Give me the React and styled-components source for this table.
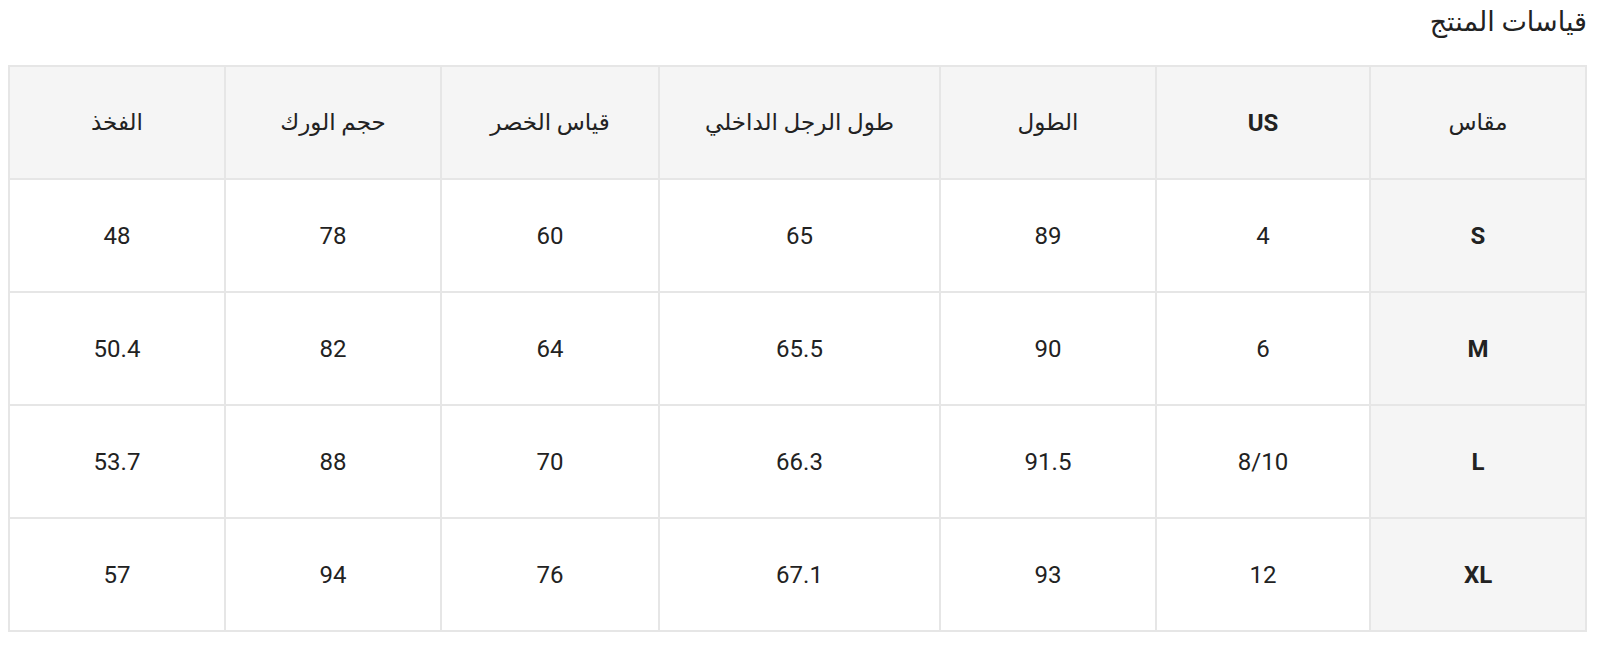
import React from 'react'
import styled, { createGlobalStyle } from 'styled-components'

const GlobalStyle = createGlobalStyle`
  html, body {
    margin: 0;
    padding: 0;
    background: #ffffff;
  }
  body {
    font-family: Roboto, "Noto Sans", "DejaVu Sans", sans-serif;
    color: #222222;
  }
`

const Page = styled.div`
  direction: rtl;
  padding: 0 13px 0 10px;
`

const Title = styled.h2`
  margin: 0;
  height: 65px;
  padding-top: 3px;
  box-sizing: border-box;
  font-size: 27px;
  font-weight: 400;
  line-height: 38px;
  color: #222222;
`

const Table = styled.table`
  width: 100%;
  border-collapse: collapse;
  table-layout: fixed;
  border: 2px solid #e6e6e6;
`

const Col = styled.col`
  width: ${(p) => p.$w}px;
`

const Cell = styled.td`
  height: 111px;
  padding: 0 8px;
  border: 2px solid #e6e6e6;
  text-align: center;
  vertical-align: middle;
  font-size: 24px;
  font-weight: ${(p) => (p.$bold ? 700 : 400)};
  background: ${(p) => (p.$shade ? '#f5f5f5' : '#ffffff')};
  color: #222222;
`

const HeadCell = styled(Cell).attrs({ as: 'th' })`
  font-size: ${(p) => (p.$bold ? 24 : 23)}px;
  background: #f5f5f5;
`

const columns = [
  { key: 'size', label: 'مقاس', w: 216 },
  { key: 'us', label: 'US', w: 214, latin: true },
  { key: 'length', label: 'الطول', w: 216 },
  { key: 'inseam', label: 'طول الرجل الداخلي', w: 281 },
  { key: 'waist', label: 'قياس الخصر', w: 218 },
  { key: 'hip', label: 'حجم الورك', w: 216 },
  { key: 'thigh', label: 'الفخذ', w: 216 },
]

const rows = [
  ['S', '4', '89', '65', '60', '78', '48'],
  ['M', '6', '90', '65.5', '64', '82', '50.4'],
  ['L', '8/10', '91.5', '66.3', '70', '88', '53.7'],
  ['XL', '12', '93', '67.1', '76', '94', '57'],
]

export default function App() {
  return (
    <Page>
      <GlobalStyle />
      <Title>قياسات المنتج</Title>
      <Table>
        <colgroup>
          {columns.map((c) => (
            <Col key={c.key} $w={c.w} />
          ))}
        </colgroup>
        <thead>
          <tr>
            {columns.map((c) => (
              <HeadCell key={c.key} $bold={c.latin}>
                {c.label}
              </HeadCell>
            ))}
          </tr>
        </thead>
        <tbody>
          {rows.map((r) => (
            <tr key={r[0]}>
              {r.map((v, i) => (
                <Cell key={i} $shade={i === 0} $bold={i === 0}>
                  <span dir="ltr">{v}</span>
                </Cell>
              ))}
            </tr>
          ))}
        </tbody>
      </Table>
    </Page>
  )
}
